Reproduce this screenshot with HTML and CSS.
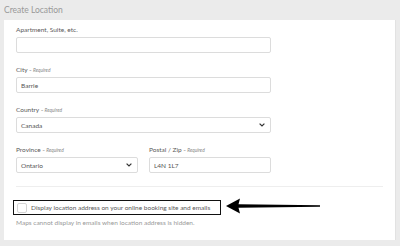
FILE: index.html
```html
<!DOCTYPE html>
<html lang="en">
<head>
  <meta charset="UTF-8" />
  <title>Create Location</title>
  <link rel="stylesheet" href="styles.css">
</head>
<body>

<header class="page-title">Create Location</header>

<section class="card">
  <div class="field">
    <label>Apartment, Suite, etc.</label>
    <input type="text" class="input wide">
  </div>

  <div class="field">
    <label>City <span class="req">– Required</span></label>
    <input type="text" class="input wide" value="Barrie">
  </div>

  <div class="field">
    <label>Country <span class="req">– Required</span></label>
    <div class="select wide">
      <span>Canada</span>
      <svg class="chev" width="6" height="4" viewBox="0 0 6 4"><path d="M0.6 0.6 L3 3 L5.4 0.6" fill="none" stroke="#333" stroke-width="1.2"/></svg>
    </div>
  </div>

  <div class="row">
    <div class="field">
      <label>Province <span class="req">– Required</span></label>
      <div class="select half">
        <span>Ontario</span>
        <svg class="chev" width="6" height="4" viewBox="0 0 6 4"><path d="M0.6 0.6 L3 3 L5.4 0.6" fill="none" stroke="#333" stroke-width="1.2"/></svg>
      </div>
    </div>
    <div class="field">
      <label>Postal / Zip <span class="req">– Required</span></label>
      <input type="text" class="input half" value="L4N 1L7">
    </div>
  </div>

  <hr class="divider">

  <div class="option">
    <span class="checkbox"></span>
    <span>Display location address on your online booking site and emails</span>
  </div>
  <p class="help">Maps cannot display in emails when location address is hidden.</p>

  <svg class="arrow" width="100" height="20" viewBox="0 0 100 20">
    <path d="M1 8 L15 0.5 L13.5 6.3 L95 7.3 L95 8.7 L13.5 9.8 L15 15.5 Z" fill="#000"/>
  </svg>
</section>

</body>
</html>
```

FILE: styles.css
```css
* { box-sizing: border-box; }
body {
  margin: 0;
  background: #ebebeb;
  font-family: 'Lato', 'Liberation Sans', sans-serif;
  color: #555;
}

.page-title {
  height: 20px;
  line-height: 20px;
  padding-left: 4px;
  font-size: 8.5px;
  color: #999;
}

.card {
  position: relative;
  margin: 0 4px;
  height: 220px;
  padding: 6px 12px 0;
  background: #fff;
  border-right: 1px solid #e2e2e2;
}

.field { margin-bottom: 13px; }

.field label {
  display: block;
  height: 8px;
  line-height: 8px;
  margin-bottom: 3px;
  font-size: 6.5px;
  color: #5a5a5a;
}

.req {
  font-size: 4.8px;
  font-style: italic;
  color: #888;
}

.input, .select {
  display: flex;
  align-items: center;
  height: 16px;
  padding: 0 4px;
  border: 1px solid #dcdcdc;
  border-radius: 2px;
  background: #fff;
  font-family: inherit;
  font-size: 6.5px;
  color: #555;
  outline: none;
}

.select { justify-content: space-between; padding-right: 5px; }

.wide { width: 255px; }
.half { width: 122px; }

.row {
  display: flex;
  gap: 11px;
}

.divider {
  margin: 0 0 13px;
  border: none;
  border-top: 1px solid #eee;
}

.option {
  display: flex;
  align-items: center;
  gap: 4px;
  width: 208px;
  height: 15px;
  margin-left: -3px;
  padding-left: 3px;
  border: 1.5px solid #111;
  font-size: 6.5px;
  color: #5a5a5a;
}

.checkbox {
  width: 10px;
  height: 10px;
  border: 1px solid #d4d4d4;
  border-radius: 2px;
  background: #fff;
}

.help {
  margin: 4px 0 0;
  font-size: 6.5px;
  color: #999;
}

.arrow {
  position: absolute;
  left: 221px;
  top: 178px;
}
```
